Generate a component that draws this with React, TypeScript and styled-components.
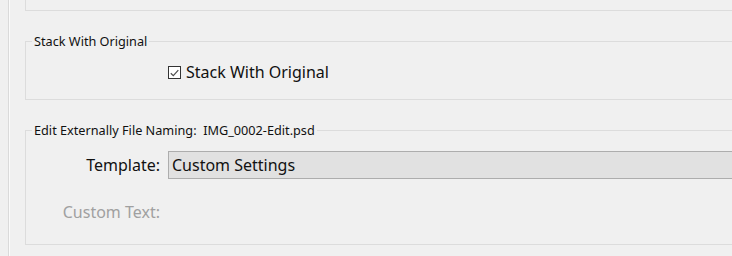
import React from 'react';
import styled, { createGlobalStyle } from 'styled-components';

const GlobalStyle = createGlobalStyle`
  html, body {
    margin: 0;
    padding: 0;
    background: #f0f0f0;
    overflow: hidden;
  }
  body {
    font-family: 'Noto Sans', 'Open Sans', 'Liberation Sans', sans-serif;
    color: #000;
  }
`;

const Page = styled.div`
  display: flex;
  width: 732px;
  height: 256px;
  overflow: hidden;
`;

const Gutter = styled.div`
  width: 8px;
  flex: none;
`;

const Splitter = styled.div`
  width: 1px;
  flex: none;
  background: #dadada;
  border-right: 1px solid #fbfbfb;
`;

const Content = styled.div`
  display: flex;
  flex-direction: column;
  padding-left: 15px;
  width: 820px;
  flex: none;
`;

const TopBox = styled.div`
  height: 10px;
  border: 1px solid #dcdcdc;
  border-top: none;
`;

const Group = styled.fieldset<{ $top: number; $height: number }>`
  margin: ${(p) => p.$top}px 0 0 0;
  padding: 0;
  border: 1px solid #dcdcdc;
  min-width: 0;
  height: ${(p) => p.$height}px;
  box-sizing: border-box;
`;

const Legend = styled.legend`
  margin-left: 6px;
  padding: 0 2px;
  font-size: 12.7px;
  line-height: 16px;
  white-space: pre;
  color: #111;
`;

const CheckRow = styled.label`
  display: flex;
  align-items: center;
  gap: 5px;
  margin: 13px 0 0 142px;
  font-size: 16px;
  line-height: 20px;
  color: #111;
`;

const CheckBox = styled.span`
  width: 11px;
  height: 11px;
  border: 1px solid #333;
  background: #fff;
  display: flex;
  align-items: center;
  justify-content: center;
  margin-top: 1px;
`;

const FormGrid = styled.div`
  display: grid;
  grid-template-columns: 134px 1fr;
  grid-auto-rows: 28px;
  column-gap: 8px;
  row-gap: 19px;
  margin-top: 13px;
  align-items: center;
`;

const FieldLabel = styled.span<{ $disabled?: boolean }>`
  text-align: right;
  font-size: 16px;
  color: ${(p) => (p.$disabled ? '#a0a0a0' : '#111')};
`;

const Select = styled.div`
  height: 28px;
  box-sizing: border-box;
  background: #e1e1e1;
  border: 1px solid #adadad;
  border-right: none;
  display: flex;
  align-items: center;
  padding-left: 3px;
  font-size: 16px;
  color: #111;
`;

export default function App() {
  return (
    <>
      <GlobalStyle />
      <Page>
        <Gutter />
        <Splitter />
        <Content>
          <TopBox />
          <Group $top={22} $height={67}>
            <Legend>Stack With Original</Legend>
            <CheckRow>
              <CheckBox>
                <svg width="9" height="8" viewBox="0 0 9 8">
                  <path d="M0.8 4.2 L3.3 6.6 L8.3 1.2" fill="none" stroke="#4d4d4d" strokeWidth="1.2" />
                </svg>
              </CheckBox>
              Stack With Original
            </CheckRow>
          </Group>
          <Group $top={22} $height={123}>
            <Legend>{'Edit Externally File Naming:  IMG_0002-Edit.psd'}</Legend>
            <FormGrid>
              <FieldLabel>Template:</FieldLabel>
              <Select>Custom Settings</Select>
              <FieldLabel $disabled>Custom Text:</FieldLabel>
              <span />
            </FormGrid>
          </Group>
        </Content>
      </Page>
    </>
  );
}
